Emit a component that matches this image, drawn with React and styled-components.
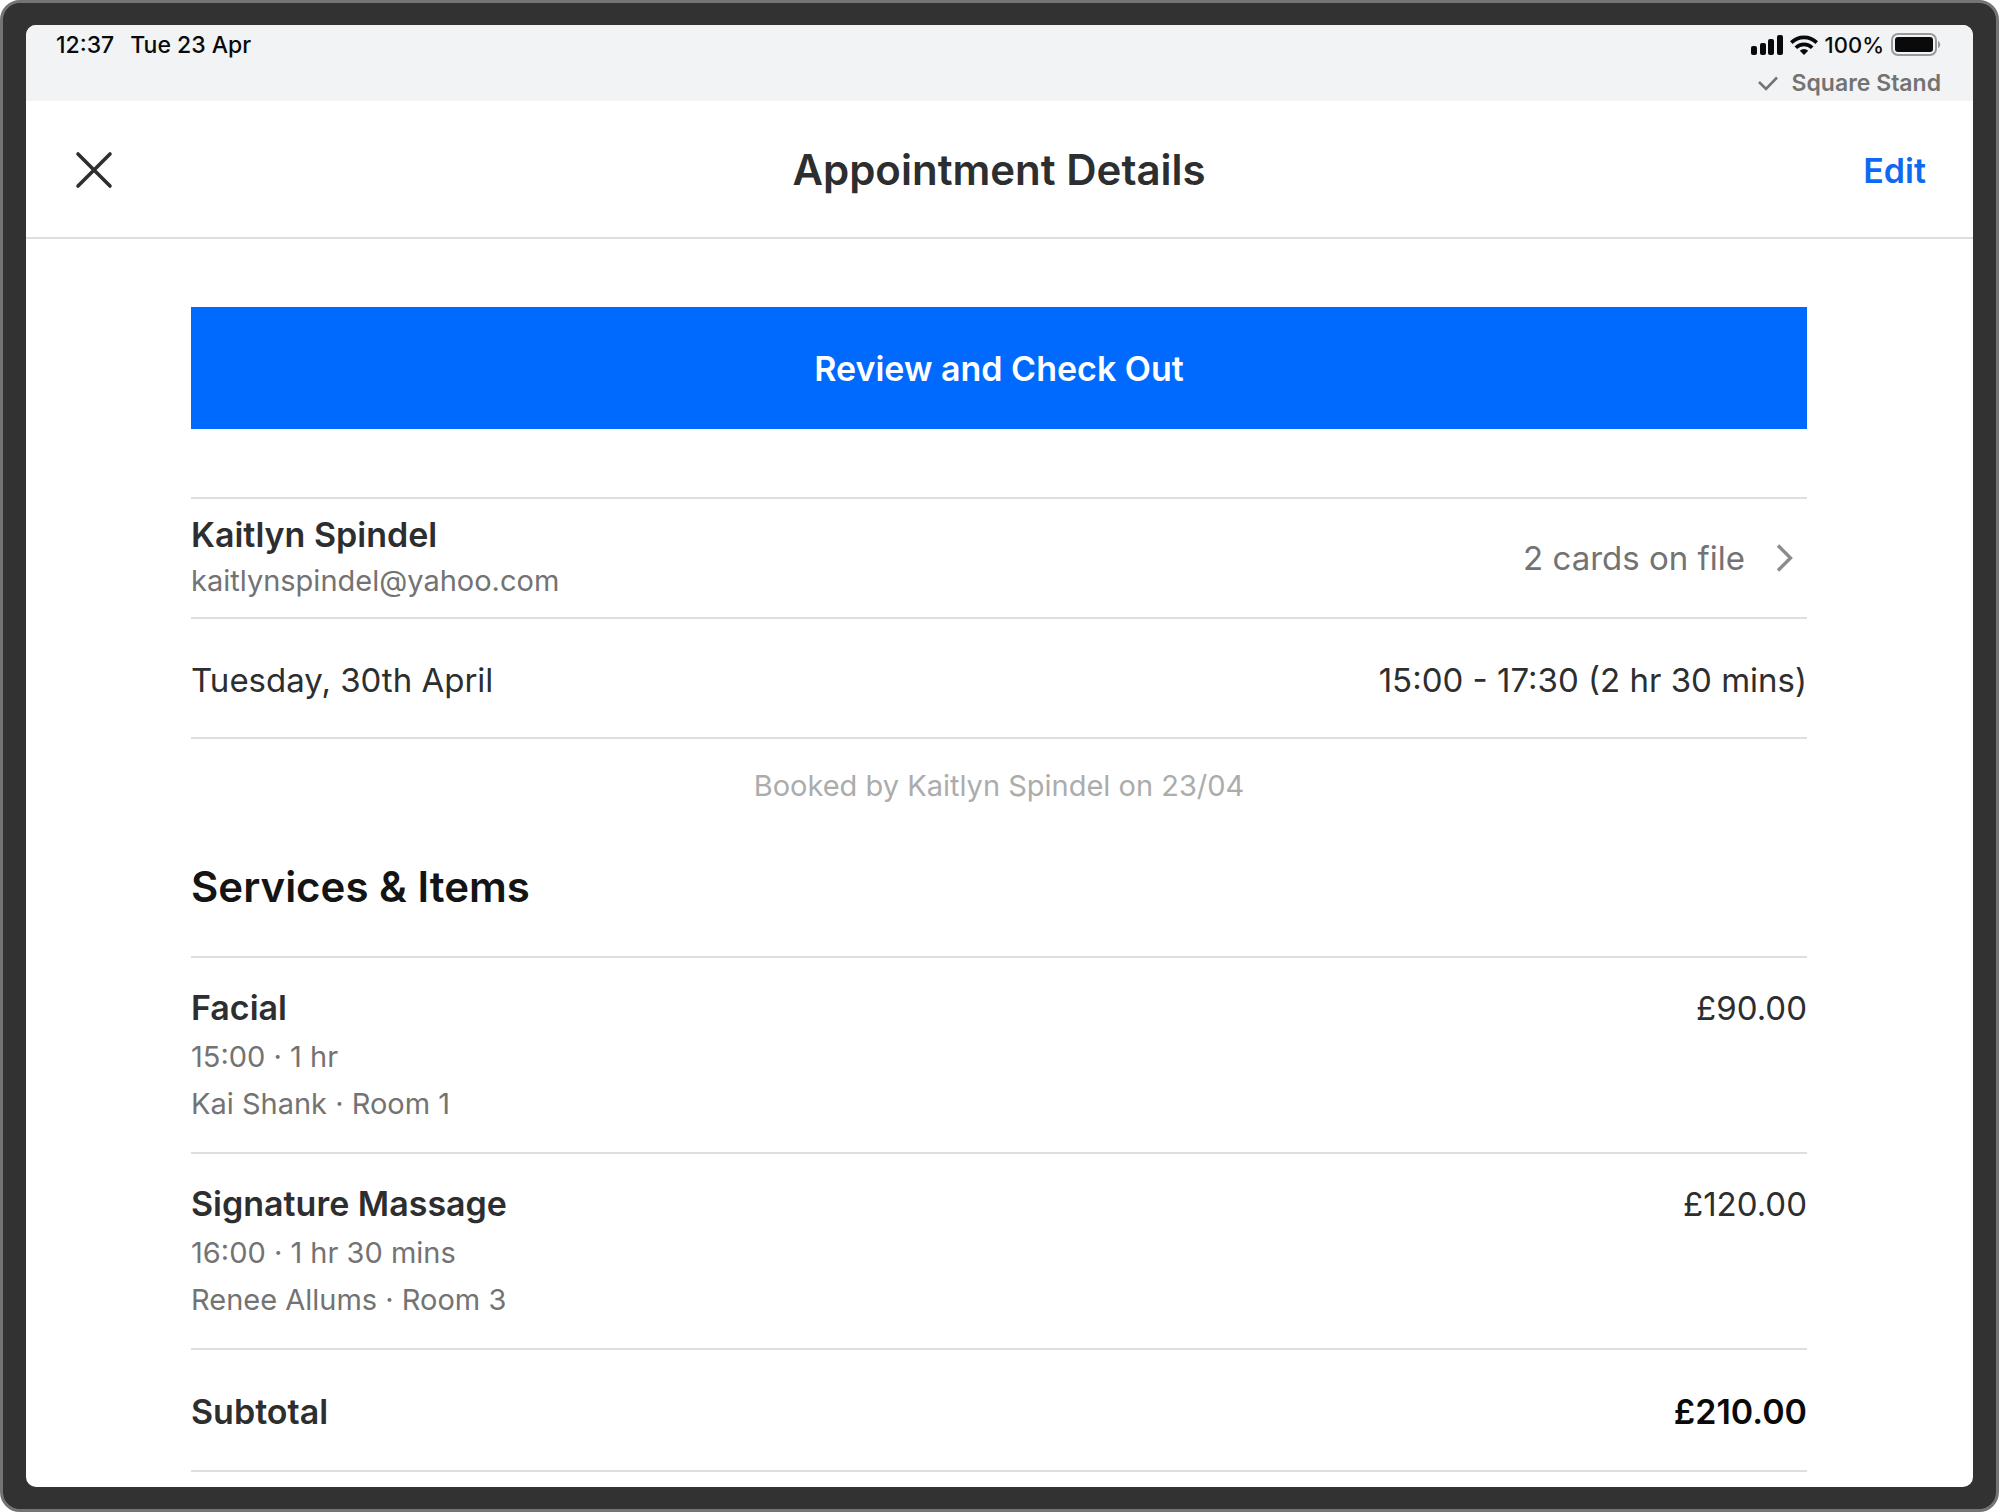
import styled, { createGlobalStyle } from 'styled-components'

const GlobalStyle = createGlobalStyle`
    * {
        box-sizing: border-box;
    }

    body {
        margin: 0;
        background: #fff;
        color: #2d2e2f;
        font-family: Inter, "Liberation Sans", sans-serif;
    }

    h1, h2, h3, p, ul {
        margin: 0;
        padding: 0;
        font-weight: inherit;
    }

    button {
        padding: 0;
        border: 0;
        background: none;
        font-family: inherit;
        cursor: pointer;
    }

    svg {
        display: block;
    }
`

const Device = styled.div`
    display: flex;
    min-height: 100vh;
    padding: 22px 23px;
    border: 3px solid #747474;
    border-radius: 20px;
    background: #323232;
`

const Screen = styled.div`
    flex: 1;
    border-radius: 10px;
    overflow: hidden;
    background: #fff;
`

const StatusBar = styled.div`
    display: flex;
    justify-content: space-between;
    height: 76px;
    padding: 4px 32px 0 30px;
    background: #f2f3f5;
    color: #0a0a0a;
    font-size: 23px;
    font-weight: 500;
    line-height: 32px;
`

const StatusGroup = styled.div`
    display: flex;
    gap: ${props => props.$gap};
    align-items: center;
    height: 32px;
`

const StatusRight = styled.div`
    display: flex;
    flex-direction: column;
    align-items: flex-end;
    gap: 6px;
`

const BatteryLevel = styled.span`
    font-size: 22px;
`

const Stand = styled.div`
    display: flex;
    align-items: center;
    gap: 14px;
    color: #737373;
    font-size: 23px;
    font-weight: 600;
`

const Header = styled.header`
    display: grid;
    grid-template-columns: 1fr auto 1fr;
    align-items: center;
    height: 138px;
    padding: 2px 47px 0 46px;
    border-bottom: 2px solid #dedede;
`

const CloseButton = styled.button`
    justify-self: start;
`

const Title = styled.h1`
    font-size: 42px;
    font-weight: 600;
    line-height: 48px;
`

const EditButton = styled.button`
    justify-self: end;
    padding-top: 2px;
    color: #0f6af2;
    font-size: 34px;
    font-weight: 600;
    line-height: 40px;
`

const Content = styled.main`
    padding: 68px 166px 14px 165px;
`

const CheckoutButton = styled.button`
    display: block;
    width: 100%;
    height: 122px;
    margin-bottom: 68px;
    background: #006aff;
    color: #fff;
    font-size: 34px;
    font-weight: 600;
`

const Row = styled.div`
    display: flex;
    justify-content: space-between;
    align-items: center;
    min-height: 120px;
    padding-top: ${props => props.$top || '0'};
    border-top: 2px solid #dedede;
    font-size: 33px;
    line-height: 44px;
`

const Name = styled.h3`
    font-size: 34px;
    font-weight: 600;
    line-height: 44px;
`

const Muted = styled.p`
    color: #737373;
    font-size: 29px;
    line-height: 47px;
`

const CardsButton = styled.button`
    display: flex;
    align-items: center;
    gap: 30px;
    padding-right: 12px;
    color: #737373;
    font-size: 33px;
`

const Booked = styled.p`
    padding: 25px 0 27px;
    border-top: 2px solid #dedede;
    color: #acacac;
    font-size: 29px;
    line-height: 44px;
    text-align: center;
`

const SectionTitle = styled.h2`
    padding: 28px 0 45px;
    color: #141414;
    font-size: 42px;
    font-weight: 600;
    line-height: 48px;
`

const List = styled.ul`
    list-style: none;
`

const Item = styled.li`
    display: flex;
    justify-content: space-between;
    min-height: 196px;
    padding: 28px 0 20px;
    border-top: 2px solid #dedede;
`

const ItemDetails = styled.div`
    padding-top: 3px;
`

const Price = styled.span`
    color: ${props => props.$strong ? '#0a0a0a' : '#2d2e2f'};
    font-size: ${props => props.$strong ? '34px' : '33px'};
    font-weight: ${props => props.$strong ? 600 : 400};
    line-height: 44px;
`

const TotalRow = styled(Row)`
    min-height: 124px;
    border-bottom: 2px solid #dedede;
`

const servicos = [
    { nome: 'Facial', horario: '15:00 · 1 hr', local: 'Kai Shank · Room 1', preco: '£90.00' },
    { nome: 'Signature Massage', horario: '16:00 · 1 hr 30 mins', local: 'Renee Allums · Room 3', preco: '£120.00' },
]

const Signal = () => (
    <svg width="32" height="20" viewBox="0 0 32 20" fill="#0a0a0a">
        <rect x="0" y="11" width="6" height="9" rx="2" />
        <rect x="9" y="8" width="6" height="12" rx="2" />
        <rect x="17" y="4" width="6" height="16" rx="2" />
        <rect x="26" y="0" width="6" height="20" rx="2" />
    </svg>
)

const Wifi = () => (
    <svg width="28" height="20" viewBox="0 0 28 20" fill="none" stroke="#0a0a0a" strokeWidth="3.6">
        <path d="M1.3 7.6a18 18 0 0 1 25.4 0" />
        <path d="M5.8 12.8a11.6 11.6 0 0 1 16.4 0" />
        <path d="M14 20l-4.2-4.2a6 6 0 0 1 8.4 0z" fill="#0a0a0a" stroke="none" />
    </svg>
)

const Battery = () => (
    <svg width="50" height="24" viewBox="0 0 50 24">
        <rect x="1" y="1" width="44" height="21" rx="6" fill="none" stroke="#9a9a9a" strokeWidth="2" />
        <rect x="4" y="4" width="38" height="15" rx="3" fill="#0a0a0a" />
        <path d="M47 8c3 1 3 6 0 7z" fill="#9a9a9a" />
    </svg>
)

const App = () => (
    <>
        <GlobalStyle />
        <Device>
            <Screen>
                <StatusBar>
                    <StatusGroup $gap="16px">
                        <span>12:37</span>
                        <span>Tue 23 Apr</span>
                    </StatusGroup>
                    <StatusRight>
                        <StatusGroup $gap="7px">
                            <Signal />
                            <Wifi />
                            <BatteryLevel>100%</BatteryLevel>
                            <Battery />
                        </StatusGroup>
                        <Stand>
                            <svg width="20" height="15" viewBox="0 0 20 15" fill="none" stroke="#737373" strokeWidth="2.6">
                                <path d="M1 6l7 7L19 1.500" />
                            </svg>
                            Square Stand
                        </Stand>
                    </StatusRight>
                </StatusBar>

                <Header>
                    <CloseButton aria-label="Close">
                        <svg width="42" height="42" viewBox="0 0 42 42" stroke="#2d2e2f" strokeWidth="3.6" strokeLinecap="round">
                            <path d="M6 5l32 32M38 5L6 37" />
                        </svg>
                    </CloseButton>
                    <Title>Appointment Details</Title>
                    <EditButton>Edit</EditButton>
                </Header>

                <Content>
                    <CheckoutButton>Review and Check Out</CheckoutButton>

                    <Row>
                        <div>
                            <Name>Kaitlyn Spindel</Name>
                            <Muted>kaitlynspindel@yahoo.com</Muted>
                        </div>
                        <CardsButton>
                            2 cards on file
                            <svg width="20" height="30" viewBox="0 0 20 30" fill="none" stroke="#8c8c8c" strokeWidth="3.4">
                                <path d="M3 2.500L15.500 15L3 27.500" />
                            </svg>
                        </CardsButton>
                    </Row>
                    <Row $top="4px">
                        <span>Tuesday, 30th April</span>
                        <span>15:00 - 17:30 (2 hr 30 mins)</span>
                    </Row>
                    <Booked>Booked by Kaitlyn Spindel on 23/04</Booked>

                    <SectionTitle>Services &amp; Items</SectionTitle>
                    <List>
                        {servicos.map(servico => (
                            <Item key={servico.nome}>
                                <div>
                                    <Name>{servico.nome}</Name>
                                    <ItemDetails>
                                        <Muted>{servico.horario}</Muted>
                                        <Muted>{servico.local}</Muted>
                                    </ItemDetails>
                                </div>
                                <Price>{servico.preco}</Price>
                            </Item>
                        ))}
                    </List>
                    <TotalRow $top="4px">
                        <Name>Subtotal</Name>
                        <Price $strong>£210.00</Price>
                    </TotalRow>
                </Content>
            </Screen>
        </Device>
    </>
)

export default App
